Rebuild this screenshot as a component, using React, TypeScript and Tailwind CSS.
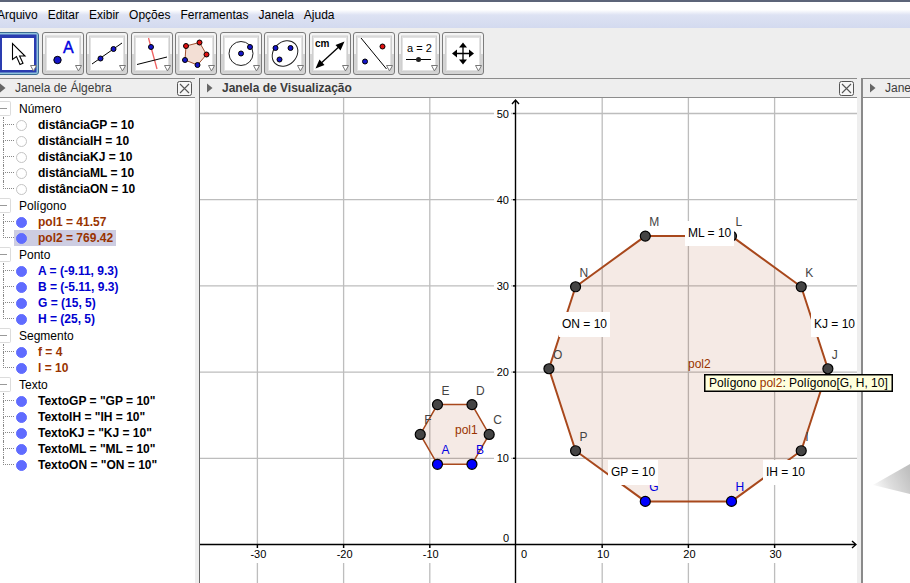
import { useState, type ReactNode } from "react";
import clsx from "clsx";

const MENUS = ["Arquivo", "Editar", "Exibir", "Opções", "Ferramentas", "Janela", "Ajuda"];

type Item = { name: string; value: string; visible?: boolean; selected?: boolean };
type Group = { title: string; color: string; items: Item[] };

const GROUPS: Group[] = [
  {
    title: "Número",
    color: "text-black",
    items: [
      { name: "distânciaGP", value: "10", visible: false },
      { name: "distânciaIH", value: "10", visible: false },
      { name: "distânciaKJ", value: "10", visible: false },
      { name: "distânciaML", value: "10", visible: false },
      { name: "distânciaON", value: "10", visible: false },
    ],
  },
  {
    title: "Polígono",
    color: "text-[#993300]",
    items: [
      { name: "pol1", value: "41.57" },
      { name: "pol2", value: "769.42", selected: true },
    ],
  },
  {
    title: "Ponto",
    color: "text-[#0000d0]",
    items: [
      { name: "A", value: "(-9.11, 9.3)" },
      { name: "B", value: "(-5.11, 9.3)" },
      { name: "G", value: "(15, 5)" },
      { name: "H", value: "(25, 5)" },
    ],
  },
  {
    title: "Segmento",
    color: "text-[#993300]",
    items: [
      { name: "f", value: "4" },
      { name: "l", value: "10" },
    ],
  },
  {
    title: "Texto",
    color: "text-black",
    items: [
      { name: "TextoGP", value: '"GP = 10"' },
      { name: "TextoIH", value: '"IH = 10"' },
      { name: "TextoKJ", value: '"KJ = 10"' },
      { name: "TextoML", value: '"ML = 10"' },
      { name: "TextoON", value: '"ON = 10"' },
    ],
  },
];

function Dot({ x, y, r = 2.5, red = false }: { x: number; y: number; r?: number; red?: boolean }) {
  return <circle cx={x} cy={y} r={r} fill={red ? "#e01010" : "#1414c8"} stroke="#000" strokeWidth="1" />;
}

const TOOLS: { label: string; icon: ReactNode }[] = [
  {
    label: "Mover",
    icon: (
      <path
        d="M15.5 11.5V27.5L19.5 24.5L23 32.5L26 31.2L22.6 24H28Z"
        fill="#fff"
        stroke="#000"
        strokeWidth="1.1"
      />
    ),
  },
  {
    label: "Ponto",
    icon: (
      <>
        <Dot x={15.5} y={28} r={3.7} />
        <text x="21" y="21" fontSize="16" fill="#0000e0" stroke="#0000e0" strokeWidth="0.4">
          A
        </text>
      </>
    ),
  },
  {
    label: "Reta",
    icon: (
      <>
        <path d="M6 32L36 11" stroke="#000" />
        <Dot x={14.5} y={26.5} />
        <Dot x={27.5} y={17} />
      </>
    ),
  },
  {
    label: "Reta perpendicular",
    icon: (
      <>
        <path d="M17.5 6L26 37" stroke="#f06060" strokeWidth="1.3" />
        <path d="M6 32.5L36 25" stroke="#000" />
        <Dot x={20} y={15} />
      </>
    ),
  },
  {
    label: "Polígono",
    icon: (
      <>
        <path d="M24.5 10.5L31.5 22.5L22.5 33L10 28L11 14Z" fill="#f3dfd5" stroke="#a05030" />
        <Dot x={24.5} y={10.5} red />
        <Dot x={11} y={14} red />
        <Dot x={31.5} y={22.5} red />
        <Dot x={10} y={28} />
        <Dot x={22.5} y={33} />
      </>
    ),
  },
  {
    label: "Círculo",
    icon: (
      <>
        <circle cx="21" cy="21.5" r="12" fill="none" stroke="#222" />
        <Dot x={21} y={21.5} />
        <Dot x={30} y={15} />
      </>
    ),
  },
  {
    label: "Elipse",
    icon: (
      <>
        <ellipse cx="21" cy="21.5" rx="14" ry="11.5" transform="rotate(-45 21 21.5)" fill="none" stroke="#222" />
        <Dot x={11.5} y={16} />
        <Dot x={26.5} y={16} />
        <Dot x={15.5} y={27.5} />
      </>
    ),
  },
  {
    label: "Distância",
    icon: (
      <>
        <text x="6" y="15" fontSize="10" fontWeight="bold">
          cm
        </text>
        <path d="M9 34L33 12" stroke="#000" strokeWidth="1.3" />
        <path d="M6.5 36.5L10.5 27.5L15.5 33ZM35.5 9.5L26.5 13L31.5 18.5Z" fill="#000" />
      </>
    ),
  },
  {
    label: "Reflexão",
    icon: (
      <>
        <path d="M8 6L33.5 37" stroke="#000" />
        <Dot x={29.5} y={14.5} red />
        <Dot x={12} y={29.5} />
      </>
    ),
  },
  {
    label: "Controle deslizante",
    icon: (
      <>
        <text x="9" y="20" fontSize="11">
          a = 2
        </text>
        <path d="M8 27.5H33" stroke="#000" />
        <circle cx="20.5" cy="27.5" r="2.5" fill="#222" />
      </>
    ),
  },
  {
    label: "Mover janela de visualização",
    icon: (
      <>
        <path d="M21 14V29M13 21.5H29" stroke="#000" strokeWidth="1.3" />
        <path
          d="M21 10.5L25 15.5H17ZM21 32.5L25 27.5H17ZM10 21.5L15 17.5V25.5ZM32 21.5L27 17.5V25.5Z"
          fill="#000"
        />
      </>
    ),
  },
];

function MenuBar() {
  return (
    <nav className="-ml-[3px] flex h-7 items-center gap-2.5 border-t-2 border-[#5c6478] bg-linear-to-b from-white from-30% via-[#dde2f3] via-50% to-[#d3daef] pb-px">
      {MENUS.map((menu) => (
        <button key={menu} type="button" className="shrink-0">
          {menu}
        </button>
      ))}
    </nav>
  );
}

function ToolBar() {
  const [active, setActive] = useState(0);
  return (
    <div className="h-[50px] bg-[#eeeeee] pt-1">
      <div className="-ml-[3px] flex w-[487px] justify-between">
        {TOOLS.map((tool, i) => (
          <button
            key={tool.label}
            type="button"
            aria-label={tool.label}
            onClick={() => setActive(i)}
            className={clsx(
              "h-[43px] w-[42px] shrink-0 overflow-hidden rounded-[3px] border",
              i === active
                ? "border-[#3a6a92] bg-[#8fc4dc]"
                : "border-[#7c7c7c] bg-linear-to-b from-[#f4f4f4] from-50% to-[#d4d4d4] to-50%"
            )}
          >
            <svg viewBox="1 1 40 41" className="block h-[41px] w-10" fill="none">
              {i === active ? (
                <rect x="2" y="2.5" width="37.5" height="38" fill="#2a3cb0" />
              ) : (
                <rect x="3.5" y="4" width="35" height="35.5" fill="#e2e2e2" stroke="#cfcfcf" />
              )}
              <rect x="5" y="6" width="32" height="32" fill="#fff" />
              <g fill="#000">{tool.icon}</g>
              <path d="M33.5 33.5H39.5L36.5 39Z" fill="#fff" stroke="#777" />
            </svg>
          </button>
        ))}
      </div>
    </div>
  );
}

function PanelHeader({ title, bold, closable = true }: { title: string; bold?: boolean; closable?: boolean }) {
  return (
    <header className="flex h-5 shrink-0 items-center overflow-hidden border-y border-[#8c8c8c] bg-[#eeeeee] text-[#3c3c3c]">
      <svg viewBox="0 0 6 10" className="h-2.5 w-1.5 shrink-0" aria-hidden="true">
        <path d="M0 0.5L5.5 5L0 9.5Z" fill="#666" />
      </svg>
      <h2 className={clsx("ml-[9px] whitespace-nowrap", bold && "font-bold")}>{title}</h2>
      {closable && (
        <button type="button" aria-label="Fechar" className="mr-[3px] ml-auto">
          <svg viewBox="0 0 15 15" className="block h-[15px] w-[15px]" fill="none" stroke="#555">
            <rect x="0.5" y="0.5" width="14" height="14" rx="2" fill="#f6f6f6" />
            <path d="M3 3L12 12M12 3L3 12" strokeWidth="1.1" />
          </svg>
        </button>
      )}
    </header>
  );
}

function TreeItem({ item, color, last }: { item: Item; color: string; last: boolean }) {
  return (
    <li className="flex h-4 items-stretch pl-[3px]">
      <span className="flex w-[11px] flex-col">
        <span className="h-2 border-b border-l border-dotted border-[#888]" />
        {!last && <span className="h-2 border-l border-dotted border-[#888]" />}
      </span>
      <label
        className={clsx(
          "flex items-center gap-[11px] pr-[3px] pl-0.5 font-bold whitespace-nowrap",
          color,
          item.selected && "bg-[#cdcde2]"
        )}
      >
        <input
          type="checkbox"
          defaultChecked={item.visible !== false}
          className="h-[11px] w-[11px] appearance-none rounded-full border border-[#c4c4c4] bg-white checked:border-[#5f6bff] checked:bg-[#5f6bff]"
        />
        {item.name} = {item.value}
      </label>
    </li>
  );
}

function AlgebraPanel() {
  return (
    <section className="flex w-[200px] shrink-0 border-r border-[#666] bg-[#eeeeee]">
      <div className="flex min-w-0 flex-1 flex-col bg-white">
        <PanelHeader title="Janela de Álgebra" />
        <div className="pt-0.5">
          {GROUPS.map((group) => (
            <div key={group.title}>
              <div className="flex h-[17px] items-center gap-2">
                <button
                  type="button"
                  aria-label={`Recolher ${group.title}`}
                  className="flex h-[15px] w-[11px] items-center rounded-r-xs border border-l-0 border-[#dcdcdc]"
                >
                  <span className="h-px w-[7px] bg-[#999]" />
                </button>
                <h3>{group.title}</h3>
              </div>
              <ul>
                {group.items.map((item, i) => (
                  <TreeItem
                    key={item.name}
                    item={item}
                    color={group.color}
                    last={i === group.items.length - 1}
                  />
                ))}
              </ul>
            </div>
          ))}
        </div>
      </div>
      <div className="w-1" />
    </section>
  );
}

// graph coordinates -> pixels
const SCALE = 8.62;
const toX = (x: number) => 316 + x * SCALE;
const toY = (y: number) => 446.5 - y * SCALE;

type Pt = { name: string; x: number; y: number; free: boolean };

// regular polygon standing on its bottom side, starting at (x, y)
function regular(names: string, x: number, y: number, side: number): Pt[] {
  const n = names.length;
  let px = x;
  let py = y;
  return names.split("").map((name, i) => {
    const pt = { name, x: px, y: py, free: i < 2 };
    const angle = (i * 2 * Math.PI) / n;
    px += side * Math.cos(angle);
    py += side * Math.sin(angle);
    return pt;
  });
}

const HEXAGON = regular("ABCDEF", -9.11, 9.3, 4);
const DECAGON = regular("GHIJKLMNOP", 15, 5, 10);

const toPoints = (pts: Pt[]) => pts.map((p) => `${toX(p.x)},${toY(p.y)}`).join(" ");

const MEASURES = [
  { text: "ML = 10", x: 488, y: 139, w: 49 },
  { text: "ON = 10", x: 362, y: 230, w: 51 },
  { text: "KJ = 10", x: 614, y: 230, w: 46 },
  { text: "GP = 10", x: 411, y: 378, w: 50 },
  { text: "IH = 10", x: 566, y: 378, w: 43 },
];

function Graph() {
  return (
    <svg className="block h-full w-full" aria-label="Janela de Visualização">
      <g stroke="#bdbdbd" strokeWidth="1.3">
        {[-30, -20, -10, 10, 20, 30].map((v) => (
          <line key={v} x1={toX(v)} x2={toX(v)} y1="0" y2="100%" />
        ))}
        {[10, 20, 30, 40, 50].map((v) => (
          <line key={v} x1="0" x2="100%" y1={toY(v)} y2={toY(v)} />
        ))}
      </g>

      {/* axes */}
      <g stroke="#000" strokeWidth="1.4" fill="none">
        <path d="M315.5 2V485M312 6L315.5 2L319 6" />
        <path d="M0 446.5H656M652 443L656 446.5L652 450" />
        {[10, 20, 30, 40, 50].map((v) => (
          <path key={v} d={`M313 ${toY(v)}H316`} />
        ))}
        {[-30, -20, -10, 10, 20, 30].map((v) => (
          <path key={v} d={`M${toX(v)} 446V450`} />
        ))}
      </g>
      <g fontSize="11" stroke="none">
        {[10, 20, 30, 40, 50].map((v) => (
          <g key={v}>
            <rect x="294" y={toY(v) - 7} width="17" height="14" fill="#fff" />
            <text x="309" y={toY(v) + 4} textAnchor="end">
              {v}
            </text>
          </g>
        ))}
        {[-30, -20, -10, 10, 20, 30].map((v) => (
          <g key={v}>
            <rect x={toX(v) - 10} y="450" width="20" height="15" fill="#fff" />
            <text x={toX(v) + 1} y="460" textAnchor="middle">
              {v}
            </text>
          </g>
        ))}
        <text x="309" y="444" textAnchor="end">
          0
        </text>
        <text x="321" y="460">
          0
        </text>
      </g>

      <g fill="#993300" fillOpacity="0.1" stroke="#a8481c">
        <polygon points={toPoints(HEXAGON)} strokeWidth="1.5" />
        <polygon points={toPoints(DECAGON)} strokeWidth="2" />
      </g>
      <g fontSize="12" fill="#993300">
        <text x="255" y="336">
          pol1
        </text>
        <text x="488" y="270">
          pol2
        </text>
      </g>

      {[...HEXAGON, ...DECAGON].map((p) => (
        <g key={p.name}>
          <circle
            cx={toX(p.x)}
            cy={toY(p.y)}
            r="5"
            fill={p.free ? "#0000ff" : "#444"}
            stroke="#000"
            strokeWidth="1.2"
          />
          <text x={toX(p.x) + 4} y={toY(p.y) - 10} fontSize="12" fill={p.free ? "#0000e0" : "#444"}>
            {p.name}
          </text>
        </g>
      ))}

      {MEASURES.map((m) => (
        <g key={m.text}>
          <rect x={m.x - 3} y={m.y - 16} width={m.w} height="25" fill="#fff" />
          <text x={m.x} y={m.y} fontSize="12">
            {m.text}
          </text>
        </g>
      ))}
    </svg>
  );
}

export default function App() {
  return (
    <div className="flex h-screen flex-col overflow-hidden bg-white font-['Liberation_Sans',Arial,sans-serif] text-xs text-black">
      <MenuBar />
      <ToolBar />
      <main className="flex min-h-0 flex-1">
        <AlgebraPanel />
        <section className="flex min-w-0 flex-1 border-r-2 border-[#8a8a8a] bg-[#eeeeee]">
          <div className="flex min-w-0 flex-1 flex-col bg-white">
            <div className="bg-[#eeeeee] [&>header]:pl-[7px]">
              <PanelHeader title="Janela de Visualização" bold />
            </div>
            <div className="relative min-h-0 flex-1">
              <Graph />
              <div
                role="tooltip"
                className="absolute top-[276px] left-[504px] z-10 border border-black bg-[#ffffdd] px-1 whitespace-nowrap shadow-[inset_0_0_0_0.5px_#000]"
              >
                Polígono <span className="text-[#993300]">pol2</span>: Polígono[G, H, 10]
              </div>
            </div>
          </div>
          <div className="w-1" />
        </section>
        <section className="flex w-[47px] shrink-0 flex-col [&>header]:pl-[7px]">
          <PanelHeader title="Janela" closable={false} />
          <svg viewBox="0 0 37 32" className="mt-[365px] ml-auto h-8 w-[37px] shrink-0" aria-hidden="true">
            <defs>
              <linearGradient id="flap" x1="0" x2="1" y1="0.7" y2="0.3">
                <stop offset="0" stopColor="#fafafa" />
                <stop offset="0.4" stopColor="#dedede" />
                <stop offset="1" stopColor="#c0c0c0" />
              </linearGradient>
            </defs>
            <path d="M0 22L37 1V31Z" fill="url(#flap)" />
          </svg>
        </section>
      </main>
    </div>
  );
}
